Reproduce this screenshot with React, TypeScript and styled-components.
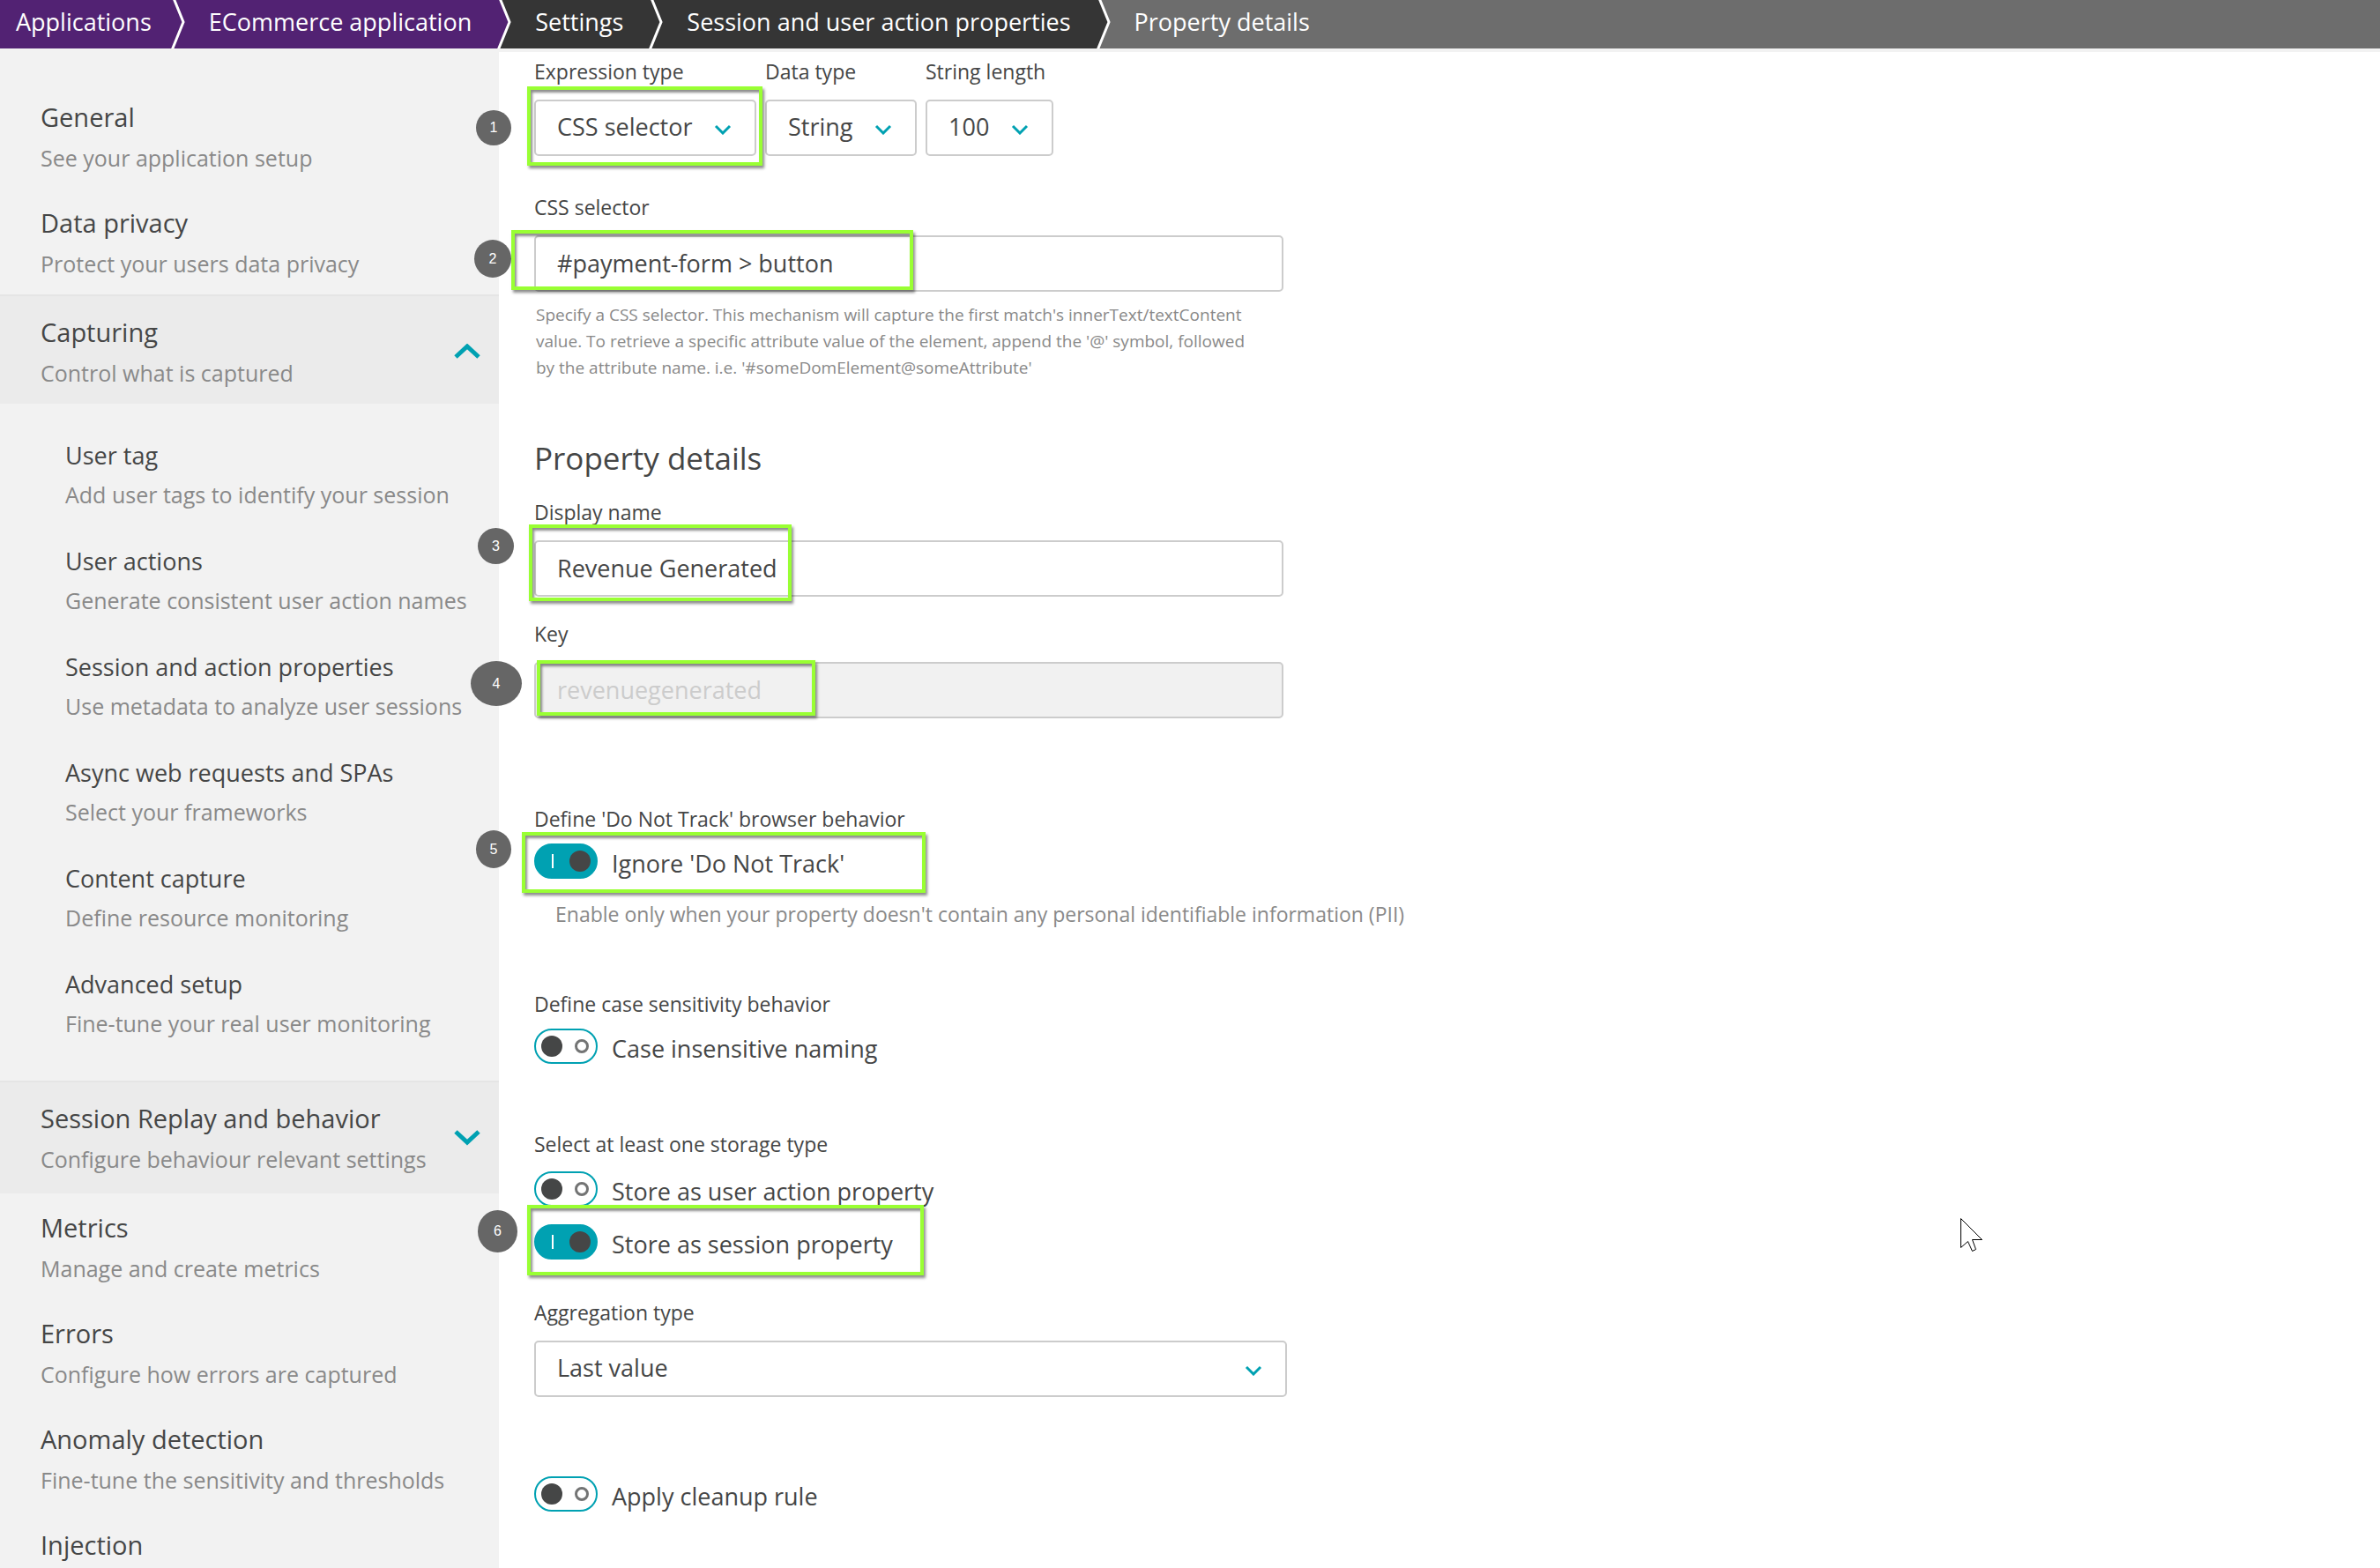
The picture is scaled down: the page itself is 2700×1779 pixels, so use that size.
import React, { useId } from "react";
import styled, { createGlobalStyle, css } from "styled-components";

const color = {
  text: "#454646",
  muted: "#898989",
  border: "#cccccc",
  teal: "#00a1b2",
  panel: "#f2f2f2",
  panelActive: "#ebebeb",
  panelLine: "#e5e5e5",
  purple: "#522273",
  dark: "#353535",
  grey: "#6d6d6d",
  lime: "#99ff33",
  badge: "#666666",
};

const GlobalStyle = createGlobalStyle`
  *, *::before, *::after { box-sizing: border-box; }
  body {
    margin: 0;
    background: #ffffff;
    color: ${color.text};
    font-family: "Open Sans", "Noto Sans", sans-serif;
    font-size: 27px;
    line-height: 38px;
  }
  h2, p, ul, ol { margin: 0; padding: 0; }
  ul, ol { list-style: none; }
  a { color: inherit; text-decoration: none; }
`;

const Shell = styled.div`
  position: relative;
  display: flex;
  flex-direction: column;
  min-height: 100vh;
`;

/* Breadcrumb bar */

const TopBar = styled.nav`
  background: ${color.grey};
  border-bottom: 4px solid ${color.panel};
`;

const CrumbList = styled.ol`
  display: flex;
  height: 55px;
  color: #ffffff;
`;

const Crumb = styled.li<{ $bg: string }>`
  display: flex;
  background: ${(p) => p.$bg};
`;

const CrumbLink = styled.a<{ $first?: boolean }>`
  display: block;
  padding: ${(p) => (p.$first ? "6px 22px 0 18px" : "6px 29px 0 26px")};
  white-space: nowrap;
`;

const CrumbEdge = styled.svg`
  display: block;
  width: 17px;
  height: 55px;
`;

/* Side navigation */

const Body = styled.div`
  display: flex;
  flex: 1;
`;

const Sidebar = styled.nav`
  flex: 0 0 566px;
  padding-top: 35px;
  background: ${color.panel};
`;

const NavTitle = styled.span`
  display: block;
  font-size: 29px;
  line-height: 40px;
`;

const NavNote = styled.span`
  display: block;
  margin-top: 9px;
  font-size: 25px;
  line-height: 34px;
  color: ${color.muted};
`;

const NavLink = styled.a`
  display: block;
  padding: 19px 0 18px 46px;
  white-space: nowrap;

  li:last-child > & {
    padding-bottom: 0;
  }
`;

const NavToggle = styled.button<{ $open: boolean }>`
  display: flex;
  align-items: center;
  justify-content: space-between;
  width: 100%;
  padding: 21px 21px ${(p) => (p.$open ? 18 : 22)}px 46px;
  border: 0;
  border-top: 2px solid ${color.panelLine};
  background: ${color.panelActive};
  color: inherit;
  font: inherit;
  text-align: left;
  white-space: nowrap;
`;

const SubList = styled.ul`
  padding: 24px 0;
`;

const SubLink = styled.a`
  display: block;
  padding: 16px 0 24px 74px;
  white-space: nowrap;
`;

const SubTitle = styled.span`
  display: block;
`;

const SubNote = styled(NavNote)`
  margin-top: 8px;
`;

/* Form */

const Main = styled.main`
  flex: 1;
  min-width: 0;
  padding: 6px 40px 0;
`;

const Section = styled.section<{ $top: number }>`
  margin-top: ${(p) => p.$top}px;
`;

const FieldRow = styled.div`
  display: flex;
  align-items: flex-start;
  gap: 10px;
`;

const Field = styled.div<{ $max?: number }>`
  display: flex;
  flex-direction: column;
  gap: 16px;
  max-width: ${(p) => (p.$max ? `${p.$max}px` : "none")};
`;

const labelText = css`
  font-size: 23px;
  line-height: 32px;
`;

const Label = styled.label`
  ${labelText}
`;

const GroupLabel = styled.div`
  ${labelText}
  margin-bottom: 12px;
`;

const control = css`
  height: 64px;
  border: 2px solid ${color.border};
  border-radius: 5px;
  background: #ffffff;
  color: inherit;
  font: inherit;
  outline: none;
`;

const TextInput = styled.input`
  ${control}
  width: 100%;
  padding: 0 24px 2px;

  &:disabled {
    background: #f1f1f1;
    color: ${color.border};
  }
`;

const SelectBox = styled.div`
  position: relative;
`;

const SelectControl = styled.select`
  ${control}
  display: block;
  min-width: 100%;
  padding: 0 70px 2px 24px;
  appearance: none;
`;

const SelectArrow = styled.svg`
  position: absolute;
  top: 28px;
  right: 28px;
  width: 20px;
  height: 12px;
  pointer-events: none;
`;

const Hint = styled.p`
  max-width: 832px;
  margin-top: 11px;
  padding-left: 2px;
  font-size: 19px;
  line-height: 30px;
  color: ${color.muted};
`;

const Heading = styled.h2`
  font-size: 35px;
  line-height: 48px;
  font-weight: 400;
`;

const Note = styled.p`
  ${labelText}
  margin-top: 23px;
  padding-left: 24px;
  color: ${color.muted};
`;

const SwitchStack = styled.div`
  display: flex;
  flex-direction: column;
  gap: 19px;
  padding-top: 3px;
`;

const SwitchRow = styled.label`
  display: flex;
  align-items: flex-start;
  gap: 16px;
  height: 41px;
`;

const SwitchText = styled.span`
  padding-top: 4px;
`;

const SwitchInput = styled.input`
  position: relative;
  flex: none;
  width: 72px;
  height: 40px;
  margin: 0;
  border: 2px solid ${color.teal};
  border-radius: 20px;
  background: #ffffff;
  appearance: none;

  &::before {
    content: "";
    position: absolute;
    top: 6px;
    left: 6px;
    width: 24px;
    height: 24px;
    border-radius: 50%;
    background: ${color.text};
  }

  &::after {
    content: "";
    position: absolute;
    top: 10px;
    right: 8px;
    width: 16px;
    height: 16px;
    border: 3px solid #737474;
    border-radius: 50%;
  }

  &:checked {
    background: ${color.teal};
  }

  &:checked::before {
    left: 38px;
  }

  &:checked::after {
    left: 18px;
    width: 2px;
    border: 0;
    border-radius: 0;
    background: #ffffff;
  }
`;

/* Callouts drawn over the form */

type Box = { x: number; y: number; w: number; h: number };

const placed = css<{ $box: Box }>`
  position: absolute;
  left: ${(p) => p.$box.x}px;
  top: ${(p) => p.$box.y}px;
  width: ${(p) => p.$box.w}px;
  height: ${(p) => p.$box.h}px;
  pointer-events: none;
`;

const Highlight = styled.div<{ $box: Box }>`
  ${placed}
  border: 4px solid ${color.lime};
  box-shadow:
    2px 3px 3px rgba(0, 0, 0, 0.45),
    inset 2px 3px 3px rgba(0, 0, 0, 0.45);
`;

const Badge = styled.div<{ $box: Box }>`
  ${placed}
  display: flex;
  align-items: center;
  justify-content: center;
  border-radius: 50%;
  background: ${color.badge};
  color: #ffffff;
  font-family: "Liberation Sans", Arial, sans-serif;
  font-size: 16px;
  line-height: 20px;
`;

const Pointer = styled.svg`
  position: absolute;
  top: 1382px;
  left: 2224px;
  width: 28px;
  height: 40px;
  overflow: visible;
  pointer-events: none;
`;

const crumbs = [
  { text: "Applications", bg: color.purple },
  { text: "ECommerce application", bg: color.purple },
  { text: "Settings", bg: color.dark },
  { text: "Session and user action properties", bg: color.dark },
  { text: "Property details", bg: color.grey },
];

const nav: { title: string; note?: string; open?: boolean; children?: [string, string][] }[] = [
  { title: "General", note: "See your application setup" },
  { title: "Data privacy", note: "Protect your users data privacy" },
  {
    title: "Capturing",
    note: "Control what is captured",
    open: true,
    children: [
      ["User tag", "Add user tags to identify your session"],
      ["User actions", "Generate consistent user action names"],
      ["Session and action properties", "Use metadata to analyze user sessions"],
      ["Async web requests and SPAs", "Select your frameworks"],
      ["Content capture", "Define resource monitoring"],
      ["Advanced setup", "Fine-tune your real user monitoring"],
    ],
  },
  { title: "Session Replay and behavior", note: "Configure behaviour relevant settings", open: false },
  { title: "Metrics", note: "Manage and create metrics" },
  { title: "Errors", note: "Configure how errors are captured" },
  { title: "Anomaly detection", note: "Fine-tune the sensitivity and thresholds" },
  { title: "Injection" },
];

const callouts: { mark: Box; badge: Box }[] = [
  { mark: { x: 598, y: 98, w: 267, h: 90 }, badge: { x: 540, y: 125, w: 40, h: 40 } },
  { mark: { x: 580, y: 261, w: 456, h: 68 }, badge: { x: 538, y: 272, w: 42, h: 43 } },
  { mark: { x: 600, y: 595, w: 298, h: 87 }, badge: { x: 542, y: 599, w: 41, h: 41 } },
  { mark: { x: 609, y: 749, w: 316, h: 63 }, badge: { x: 534, y: 750, w: 58, h: 51 } },
  { mark: { x: 592, y: 944, w: 458, h: 69 }, badge: { x: 540, y: 942, w: 40, h: 43 } },
  { mark: { x: 598, y: 1367, w: 450, h: 80 }, badge: { x: 542, y: 1373, w: 45, h: 48 } },
];

function Breadcrumbs() {
  return (
    <TopBar aria-label="Breadcrumb">
      <CrumbList>
        {crumbs.map((c, i) => {
          const next = crumbs[i + 1];
          return (
            <Crumb key={c.text} $bg={c.bg}>
              <CrumbLink href="#" $first={i === 0} aria-current={next ? undefined : "page"}>
                {c.text}
              </CrumbLink>
              {next && (
                <CrumbEdge viewBox="0 0 17 55" aria-hidden="true">
                  <path d="M3 0 14 25 1 55H17V0Z" fill={next.bg} />
                  <path d="M3-2 14 25 1 57" fill="none" stroke="#ffffff" strokeWidth="3" />
                </CrumbEdge>
              )}
            </Crumb>
          );
        })}
      </CrumbList>
    </TopBar>
  );
}

function SideNav() {
  return (
    <Sidebar aria-label="Settings">
      <ul>
        {nav.map((item) => (
          <li key={item.title}>
            {item.open === undefined ? (
              <NavLink href="#">
                <NavTitle>{item.title}</NavTitle>
                {item.note && <NavNote>{item.note}</NavNote>}
              </NavLink>
            ) : (
              <NavToggle type="button" $open={item.open} aria-expanded={item.open}>
                <span>
                  <NavTitle>{item.title}</NavTitle>
                  <NavNote>{item.note}</NavNote>
                </span>
                <svg width="30" height="18" viewBox="0 0 30 18" fill="none" stroke={color.teal} strokeWidth="5" aria-hidden="true">
                  <path d={item.open ? "M2 15 15 3 28 15" : "M2 2 15 14 28 2"} />
                </svg>
              </NavToggle>
            )}
            {item.children && (
              <SubList>
                {item.children.map(([title, note]) => (
                  <li key={title}>
                    <SubLink href="#">
                      <SubTitle>{title}</SubTitle>
                      <SubNote>{note}</SubNote>
                    </SubLink>
                  </li>
                ))}
              </SubList>
            )}
          </li>
        ))}
      </ul>
    </Sidebar>
  );
}

function SelectField({ label, value, max }: { label: string; value: string; max?: number }) {
  const id = useId();
  return (
    <Field $max={max}>
      <Label htmlFor={id}>{label}</Label>
      <SelectBox>
        <SelectControl id={id} defaultValue={value}>
          <option value={value}>{value}</option>
        </SelectControl>
        <SelectArrow viewBox="0 0 20 12" fill="none" stroke={color.teal} strokeWidth="3" aria-hidden="true">
          <path d="M2 2 10 10 18 2" />
        </SelectArrow>
      </SelectBox>
    </Field>
  );
}

function TextField({ label, value, disabled }: { label: string; value: string; disabled?: boolean }) {
  const id = useId();
  return (
    <Field $max={850}>
      <Label htmlFor={id}>{label}</Label>
      <TextInput id={id} type="text" defaultValue={value} disabled={disabled} />
    </Field>
  );
}

function Switch({ label, on }: { label: string; on?: boolean }) {
  return (
    <SwitchRow>
      <SwitchInput type="checkbox" role="switch" defaultChecked={on} />
      <SwitchText>{label}</SwitchText>
    </SwitchRow>
  );
}

export default function App() {
  return (
    <Shell>
      <GlobalStyle />
      <Breadcrumbs />
      <Body>
        <SideNav />
        <Main>
          <FieldRow>
            <SelectField label="Expression type" value="CSS selector" />
            <SelectField label="Data type" value="String" />
            <SelectField label="String length" value="100" />
          </FieldRow>

          <Section $top={42}>
            <TextField label="CSS selector" value="#payment-form > button" />
            <Hint>
              Specify a CSS selector. This mechanism will capture the first match's innerText/textContent value. To
              retrieve a specific attribute value of the element, append the '@' symbol, followed by the attribute
              name. i.e. '#someDomElement@someAttribute'
            </Hint>
          </Section>

          <Section $top={64}>
            <Heading>Property details</Heading>
          </Section>
          <Section $top={21}>
            <TextField label="Display name" value="Revenue Generated" />
          </Section>
          <Section $top={26}>
            <TextField label="Key" value="revenuegenerated" disabled />
          </Section>

          <Section $top={98}>
            <GroupLabel>Define 'Do Not Track' browser behavior</GroupLabel>
            <Switch label="Ignore 'Do Not Track'" on />
            <Note>Enable only when your property doesn't contain any personal identifiable information (PII)</Note>
          </Section>

          <Section $top={70}>
            <GroupLabel>Define case sensitivity behavior</GroupLabel>
            <Switch label="Case insensitive naming" />
          </Section>

          <Section $top={74}>
            <GroupLabel>Select at least one storage type</GroupLabel>
            <SwitchStack>
              <Switch label="Store as user action property" />
              <Switch label="Store as session property" on />
            </SwitchStack>
          </Section>

          <Section $top={43}>
            <SelectField label="Aggregation type" value="Last value" max={854} />
          </Section>

          <Section $top={90}>
            <Switch label="Apply cleanup rule" />
          </Section>
        </Main>
      </Body>

      {callouts.map(({ mark, badge }, i) => (
        <React.Fragment key={i}>
          <Highlight $box={mark} />
          <Badge $box={badge}>{i + 1}</Badge>
        </React.Fragment>
      ))}
      <Pointer viewBox="-0.5 -0.5 28 40" aria-hidden="true">
        <path d="M0 0V33L8 26 13 37 17 35 13 24H24Z" fill="#ffffff" stroke="#000000" strokeWidth="1" />
      </Pointer>
    </Shell>
  );
}
